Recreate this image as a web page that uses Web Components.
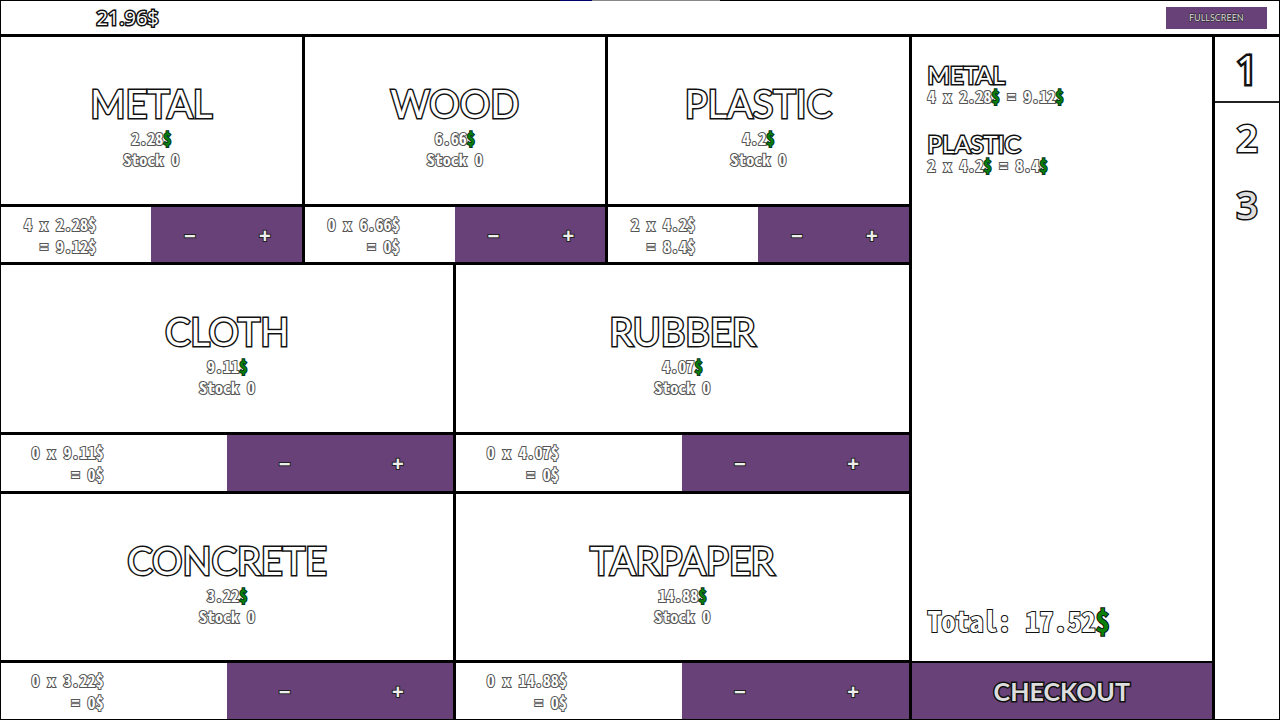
<!DOCTYPE html>
<html lang="en">
<head>
<meta charset="UTF-8">
<meta name="viewport" content="width=device-width, initial-scale=1.0">
<title>Shop</title>
<style>
  * {
    box-sizing: border-box;
  }
  html, body {
    height: 100%;
    margin: 0;
  }
  body {
    --main: #674177;
    --line: #000;
    --money: #088008;
    --title: Lato, "Open Sans", sans-serif;
    --number: "Open Sans", sans-serif;
    --mono: "Noto Sans Mono CJK JP", "DejaVu Sans Mono", monospace;
    color: #fff;
    font-family: var(--mono);
    font-size: 16px;
    font-weight: bold;
  }
</style>
</head>
<body>
<shop-page></shop-page>

<script>
  class ShopHeader extends HTMLElement {
    constructor() {
      super();
      this.attachShadow({ mode: "open" });
    }

    connectedCallback() {
      this.shadowRoot.innerHTML = `
        <style>
          :host {
            display: flex;
            justify-content: space-between;
            align-items: center;
            background-color: #fff;
            padding-right: 12px;
          }
          .money {
            width: 20%;
            text-align: center;
            font: normal 20px/32px var(--number);
            -webkit-text-stroke: 3px #111;
            paint-order: stroke fill;
          }
          button {
            width: 8%;
            height: 22px;
            padding: 0;
            border: none;
            background-color: var(--main);
            color: #ddd;
            font: 9px/22px var(--title);
            -webkit-text-stroke: 1px #222;
            paint-order: stroke fill;
            cursor: pointer;
          }
        </style>
        <div class="money"><slot></slot></div>
        <button type="button">FULLSCREEN</button>
      `;
    }
  }
  customElements.define("shop-header", ShopHeader);

  class ShopItem extends HTMLElement {
    constructor() {
      super();
      this.attachShadow({ mode: "open" });
    }

    connectedCallback() {
      const name = this.getAttribute("name");
      const price = this.getAttribute("price");
      const amount = this.getAttribute("amount") || 0;
      const sum = +(price * amount).toFixed(2);

      this.shadowRoot.innerHTML = `
        <style>
          :host {
            display: grid;
            grid-template-rows: 3fr 1fr;
            gap: 3px;
            min-width: 0;
            background-color: var(--line);
          }
          .info {
            display: flex;
            flex-direction: column;
            justify-content: center;
            align-items: center;
            padding-top: 7px;
            background-color: #fff;
            line-height: 21px;
            -webkit-text-stroke: 2px #555;
            paint-order: stroke fill;
          }
          h2 {
            margin: 0;
            font: normal 38px/50px var(--title);
            -webkit-text-stroke: 3px #111;
          }
          p {
            margin: 0;
          }
          .dollar {
            color: var(--money);
            -webkit-text-stroke-color: #032;
          }
          .buy {
            display: grid;
            grid-template-columns: 2fr 1fr 1fr;
            background-color: #fff;
          }
          .count {
            display: flex;
            align-items: center;
            padding-left: calc(8px + 10%);
            line-height: 22px;
            text-align: right;
            white-space: nowrap;
            -webkit-text-stroke: 2px #555;
            paint-order: stroke fill;
          }
          button {
            padding: 2px 0 0 2px;
            border: none;
            background-color: var(--main);
            color: #eee;
            font: bold 20px/22px "Liberation Sans", sans-serif;
            -webkit-text-stroke: 2px #222;
            paint-order: stroke fill;
            cursor: pointer;
          }
        </style>
        <div class="info">
          <h2>${name}</h2>
          <p>${price}<span class="dollar">$</span></p>
          <p>Stock 0</p>
        </div>
        <div class="buy">
          <div class="count"><p>${amount} x ${price}$<br>= ${sum}$</p></div>
          <button type="button" aria-label="Remove ${name}">&minus;</button>
          <button type="button" aria-label="Add ${name}">+</button>
        </div>
      `;
    }
  }
  customElements.define("shop-item", ShopItem);

  class CartItem extends HTMLElement {
    constructor() {
      super();
      this.attachShadow({ mode: "open" });
    }

    connectedCallback() {
      const price = this.getAttribute("price");
      const amount = this.getAttribute("amount");
      const sum = +(price * amount).toFixed(2);

      this.shadowRoot.innerHTML = `
        <style>
          :host {
            display: block;
            -webkit-text-stroke: 2px #555;
            paint-order: stroke fill;
          }
          h3 {
            margin: 0;
            font: normal 24px/22px var(--title);
            -webkit-text-stroke: 3px #111;
          }
          p {
            margin: 0;
            line-height: 21px;
          }
          .dollar {
            color: var(--money);
            -webkit-text-stroke-color: #032;
          }
        </style>
        <h3>${this.getAttribute("name")}</h3>
        <p>${amount} x ${price}<span class="dollar">$</span> = ${sum}<span class="dollar">$</span></p>
      `;
    }
  }
  customElements.define("cart-item", CartItem);

  class ShopCart extends HTMLElement {
    constructor() {
      super();
      this.attachShadow({ mode: "open" });
    }

    connectedCallback() {
      this.shadowRoot.innerHTML = `
        <style>
          :host {
            display: flex;
            flex-direction: column;
            min-width: 0;
            background-color: #fff;
          }
          .list {
            flex: 1;
            display: flex;
            flex-direction: column;
            gap: 26px;
            padding: 27px 16px;
          }
          .total {
            margin: 0;
            padding: 0 16px 20px;
            font-size: 28px;
            line-height: 42px;
            -webkit-text-stroke: 2px #111;
            paint-order: stroke fill;
          }
          .dollar {
            color: var(--money);
          }
          button {
            height: 58px;
            padding: 0;
            border: none;
            border-top: 2px solid var(--line);
            background-color: var(--main);
            color: #ddd;
            font: bold 25px/32px var(--title);
            -webkit-text-stroke: 3px #111;
            paint-order: stroke fill;
            cursor: pointer;
          }
        </style>
        <div class="list"><slot></slot></div>
        <p class="total">Total: ${this.getAttribute("total")}<span class="dollar">$</span></p>
        <button type="button">CHECKOUT</button>
      `;
    }
  }
  customElements.define("shop-cart", ShopCart);

  class ShopTabs extends HTMLElement {
    constructor() {
      super();
      this.attachShadow({ mode: "open" });
    }

    connectedCallback() {
      this.shadowRoot.innerHTML = `
        <style>
          :host {
            display: flex;
            flex-direction: column;
            background-color: #fff;
          }
          button {
            height: 67px;
            padding: 0;
            border: none;
            background: none;
            color: #fff;
            font: 600 38px/50px var(--number);
            -webkit-text-stroke: 3px #111;
            paint-order: stroke fill;
            cursor: pointer;
          }
          .active {
            height: 66px;
            border-bottom: 2px solid #222;
            font-weight: normal;
            -webkit-text-stroke: 5px #111;
          }
          .hover {
            color: #ddd;
          }
        </style>
        <button type="button" class="active">1</button>
        <button type="button">2</button>
        <button type="button" class="hover">3</button>
      `;
    }
  }
  customElements.define("shop-tabs", ShopTabs);

  class ShopPage extends HTMLElement {
    constructor() {
      super();
      this.attachShadow({ mode: "open" });
    }

    connectedCallback() {
      // the black background shows through the gaps as the lines
      this.shadowRoot.innerHTML = `
        <style>
          :host {
            box-sizing: border-box;
            display: grid;
            grid-template-rows: 33px 1fr;
            gap: 3px;
            min-height: 100vh;
            padding: 1px;
            background: linear-gradient(to right, #000 43.75%, #00006a 43.75% 46.25%, #888 46.25% 56.25%, #000 56.25%) top / 100% 1px no-repeat var(--line);
          }
          .content {
            display: grid;
            grid-template-columns: 1fr 64px;
            gap: 3px;
          }
          .shop {
            display: grid;
            grid-template-columns: repeat(4, 1fr);
            gap: 3px;
          }
          .items {
            grid-column: span 3;
            display: grid;
            grid-template-columns: repeat(6, 1fr);
            grid-auto-rows: 1fr;
            gap: 3px;
          }
          shop-item {
            grid-column: span 3;
          }
          .small {
            grid-column: span 2;
          }
        </style>
        <shop-header>21.96$</shop-header>
        <div class="content">
          <div class="shop">
            <div class="items">
              <shop-item class="small" name="METAL" price="2.28" amount="4"></shop-item>
              <shop-item class="small" name="WOOD" price="6.66"></shop-item>
              <shop-item class="small" name="PLASTIC" price="4.2" amount="2"></shop-item>
              <shop-item name="CLOTH" price="9.11"></shop-item>
              <shop-item name="RUBBER" price="4.07"></shop-item>
              <shop-item name="CONCRETE" price="3.22"></shop-item>
              <shop-item name="TARPAPER" price="14.88"></shop-item>
            </div>
            <shop-cart total="17.52">
              <cart-item name="METAL" price="2.28" amount="4"></cart-item>
              <cart-item name="PLASTIC" price="4.2" amount="2"></cart-item>
            </shop-cart>
          </div>
          <shop-tabs></shop-tabs>
        </div>
      `;
    }
  }
  customElements.define("shop-page", ShopPage);
</script>
</body>
</html>
